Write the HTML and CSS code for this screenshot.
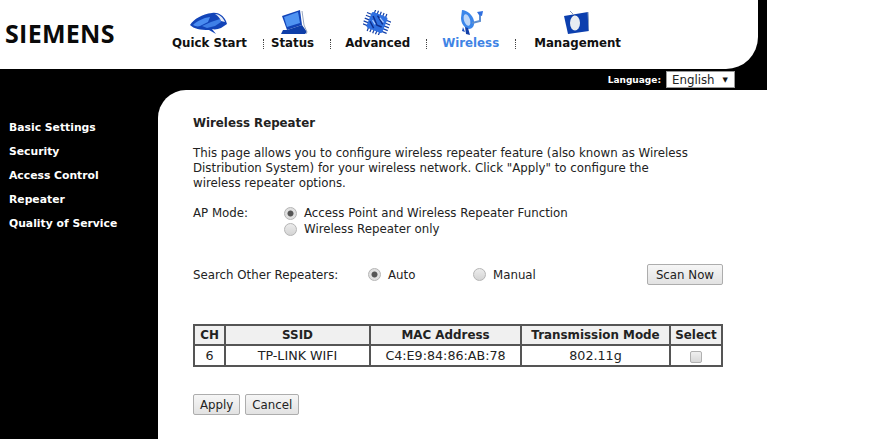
FILE: index.html
```html
<!DOCTYPE html>
<html lang="en">
<head>
<meta charset="utf-8">
<title>Wireless Repeater</title>
<link rel="stylesheet" href="styles.css">
</head>
<body>
<div class="top">
  <header class="header">
    <div class="logo">SIEMENS</div>
    <nav class="nav">
      <a class="nav-item qs">
        <svg class="ic" width="40" height="24" viewBox="0 0 40 24"><path d="M1 14C5 8 13 3 23 2c6-1 11 2 14 8l1 3-6 4c-3 1-6 2-9 1l4 5-7-4C11 19 5 18 1 14z" fill="#1244b8"/><path d="M4 14c4-4 10-7 17-8l-2 5-8 4c-3 1-5 0-7-1z" fill="#4a8cf0"/><path d="M13 15l9-4 9-3 1 3-6 4-8 2z" fill="#3f7fe6"/><path d="M26 3c4 0 8 3 10 8l-4-1c-1-3-3-5-6-7z" fill="#e6ecf8"/></svg>
        <span>Quick Start</span>
      </a>
      <i class="sep"></i>
      <a class="nav-item st">
        <svg class="ic" width="28" height="25" viewBox="0 0 28 25"><path d="M2 6l18-6 2 15-15 5z" fill="#1244b8"/><path d="M4 7l14-5 2 11-13 4z" fill="#4f93f2"/><path d="M7 20l15-5 5 7-2 2H1l2-4z" fill="#0e3ea8"/><path d="M22 1l2 14 3 7-1 2" stroke="#9aa8c0" fill="none"/></svg>
        <span>Status</span>
      </a>
      <i class="sep"></i>
      <a class="nav-item ad">
        <svg class="ic" width="28" height="25" viewBox="0 0 28 25"><g transform="rotate(22 14 12.5)"><path d="M8 6V1M11 6V1M14 6V1M17 6V1M20 6V1M8 24v-5M11 24v-5M14 24v-5M17 24v-5M20 24v-5M1 7h6M1 10h6M1 13h6M1 16h6M1 19h6M21 7h6M21 10h6M21 13h6M21 16h6M21 19h6" stroke="#123fa8" stroke-width="1.2"/><rect x="5.5" y="4" width="17" height="17" rx="2" fill="#2f6fe0"/><path d="M8 8l7 7h5M12 6l8 6M7 14l6 5" stroke="#0e2f90" stroke-width="1.5" fill="none"/><path d="M9 12l4 3M15 7l5 3" stroke="#a6c8ff" stroke-width="1.3"/></g></svg>
        <span>Advanced</span>
      </a>
      <i class="sep"></i>
      <a class="nav-item wl">
        <svg class="ic" width="24" height="26" viewBox="0 0 24 26"><path d="M2 1c5 0 11 5 12 11 1 5-2 8-5 8-5-1-8-6-8-11z" fill="#3b86ea"/><ellipse cx="7" cy="11" rx="3" ry="6" transform="rotate(-18 7 11)" fill="#bcd6f8"/><path d="M8 19l2 7-4-1-1-7z" fill="#123fa8"/><path d="M3 18l-1 4 3 1z" fill="#1d4fc0"/><path d="M12 14l8-2V5" stroke="#5f8fd0" stroke-width="2" fill="none"/><path d="M17 3l6-1-1 5-3-1z" fill="#2f6fe0"/></svg>
        <span>Wireless</span>
      </a>
      <i class="sep"></i>
      <a class="nav-item mg">
        <svg class="ic" width="26" height="24" viewBox="0 0 26 24"><path d="M1 6l24-4 1 19-21 3z" fill="#0c3fae"/><path d="M25 2l1 19" stroke="#8aa0c0" stroke-width="1"/><ellipse cx="12" cy="13" rx="5" ry="7.5" fill="#e8ecf2"/><path d="M7 1l5 5" stroke="#8a9ab8"/></svg>
        <span>Management</span>
      </a>
    </nav>
  </header>
  <div class="lang">
    <span class="lang-label">Language:</span>
    <span class="lang-select">English<b class="caret">▼</b></span>
  </div>
</div>
<div class="main">
  <aside class="side">
    <a>Basic Settings</a>
    <a>Security</a>
    <a>Access Control</a>
    <a>Repeater</a>
    <a>Quality of Service</a>
  </aside>
  <section class="content">
    <h1>Wireless Repeater</h1>
    <p class="intro">This page allows you to configure wireless repeater feature (also known as Wireless Distribution System) for your wireless network. Click "Apply" to configure the wireless repeater options.</p>
    <div class="mode">
      <div class="mode-label">AP Mode:</div>
      <div class="mode-opts">
        <label class="opt"><input type="radio" name="m" checked>Access Point and Wireless Repeater Function</label>
        <label class="opt"><input type="radio" name="m">Wireless Repeater only</label>
      </div>
    </div>
    <div class="search">
      <div class="search-label">Search Other Repeaters:</div>
      <label class="opt auto"><input type="radio" name="s" checked>Auto</label>
      <label class="opt manual"><input type="radio" name="s">Manual</label>
      <button class="btn scan">Scan Now</button>
    </div>
    <table class="tbl">
      <colgroup><col class="c1"><col class="c2"><col class="c3"><col class="c4"><col class="c5"></colgroup>
      <tr><th>CH</th><th>SSID</th><th>MAC Address</th><th>Transmission Mode</th><th>Select</th></tr>
      <tr><td>6</td><td>TP-LINK WIFI</td><td>C4:E9:84:86:AB:78</td><td>802.11g</td><td><input type="checkbox"></td></tr>
    </table>
    <div class="actions">
      <button class="btn">Apply</button>
      <button class="btn">Cancel</button>
    </div>
  </section>
</div>
</body>
</html>
```
FILE: styles.css
```css
* { box-sizing: border-box; }
html, body { margin: 0; padding: 0; height: 100%; overflow: hidden; background: #fff; }
body { font-family: "DejaVu Sans", sans-serif; font-size: 11.8px; color: #222; display: flex; flex-direction: column; }

.top { width: 767px; height: 90px; background: #000; flex: none; }
.header { width: 758px; height: 69px; background: #fff; border-bottom-right-radius: 32px; display: flex; }
.logo { font-family: "Open Sans", sans-serif; font-weight: 700; font-size: 25px; line-height: 30px; color: #0a0a0a; padding: 18px 0 0 5px; width: 172px; letter-spacing: 0.3px; }
.nav { display: flex; align-items: flex-start; font-weight: 700; font-size: 11.8px; color: #111; height: 69px; }
.nav-item { position: relative; display: block; padding-top: 36px; line-height: 15px; white-space: nowrap; }
.nav-item span { display: block; }
.ic { position: absolute; top: 0; left: 0; }
.qs .ic { left: 17px; top: 11px; }
.st .ic { left: 9px; top: 10px; }
.ad .ic { left: 18px; top: 10px; }
.wl .ic { left: 18px; top: 9px; }
.mg .ic { left: 29px; top: 10px; }
.wl { color: #3f84e5; }
.sep { display: block; width: 1px; height: 10px; margin: 39px 0 0; border-left: 1px dotted #444; }
.qs { margin-right: 16px; }
.st { margin: 0 16px 0 7px; }
.ad { margin: 0 16px 0 14px; }
.wl { margin: 0 16px 0 15px; }
.mg { margin-left: 18px; }

.lang { height: 21px; display: flex; justify-content: flex-end; align-items: center; padding-right: 32px; color: #fff; }
.lang-label { font-size: 9px; font-weight: 700; margin-right: 5px; }
.lang-select { display: flex; justify-content: space-between; align-items: center; width: 69px; height: 17px; background: #fff; color: #222; border: 1px solid #999; padding: 0 6px 0 5px; font-size: 11.8px; }
.caret { font-size: 7px; color: #111; }

.main { flex: 1; display: flex; min-height: 0; background: linear-gradient(#000, #000) left top / 190px 30px no-repeat, #fff; }
.side { width: 158px; flex: none; background: #000; padding-top: 26px; display: flex; flex-direction: column; }
.side a { display: block; height: 24px; line-height: 24px; padding-left: 9px; color: #fff; font-weight: 700; font-size: 10.8px; white-space: nowrap; }
.content { flex: 1; background: #fff; border-top-left-radius: 28px; padding: 25px 0 0 35px; }

h1 { margin: 1px 0 0; font-size: 11.8px; font-weight: 700; line-height: 15px; color: #222; }
.intro { margin: 15px 0 0; width: 500px; line-height: 15px; }
.mode { display: flex; margin-top: 14px; line-height: 16px; }
.mode-label { width: 91px; }
.opt { display: flex; align-items: center; height: 16px; white-space: nowrap; }
input[type=radio] { appearance: none; width: 13px; height: 13px; margin: 0 7px 0 0; border-radius: 50%; border: 1px solid #b5b5b5; background: linear-gradient(#ececec, #d4d4d4); flex: none; }
input[type=radio]:checked { background: radial-gradient(circle, #555 0, #555 2.6px, #e0e0e0 3.4px); }
.mode-opts { display: flex; flex-direction: column; }
.search { display: flex; align-items: center; width: 530px; margin-top: 27px; height: 21px; }
.search-label { width: 175px; }
.auto { width: 105px; }
.manual { flex: 1; }
.btn { font: 11.8px "DejaVu Sans", sans-serif; color: #222; height: 21px; padding: 0 6px; border: 1px solid #adadad; border-radius: 2px; background: linear-gradient(#f6f6f6, #e2e2e2); }
.scan { padding: 0 8px; }
.tbl { border-collapse: collapse; table-layout: fixed; width: 528px; margin-top: 39px; border: 2px solid #555; }
.tbl th, .tbl td { border: 2px solid #555; text-align: center; padding: 0; height: 21px; line-height: 15px; }
.tbl th { background: #f0f0f0; font-size: 11.9px; height: 20px; }
.tbl td { font-size: 12.7px; }
.c1 { width: 31px; } .c2 { width: 145px; } .c3 { width: 151px; } .c4 { width: 149px; } .c5 { width: 52px; }
input[type=checkbox] { appearance: none; width: 12px; height: 12px; margin: 0; vertical-align: middle; border: 1px solid #b0b0b0; border-radius: 2px; background: linear-gradient(#efefef, #d8d8d8); }
.actions { display: flex; gap: 5px; margin-top: 27px; }
```
